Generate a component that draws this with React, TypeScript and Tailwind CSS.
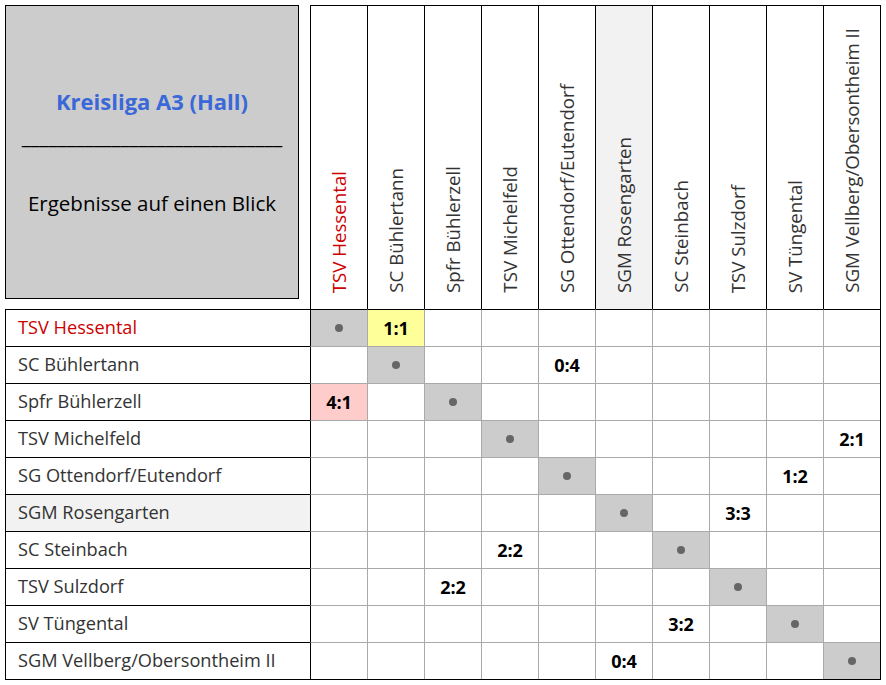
const teams = [
  'TSV Hessental',
  'SC Bühlertann',
  'Spfr Bühlerzell',
  'TSV Michelfeld',
  'SG Ottendorf/Eutendorf',
  'SGM Rosengarten',
  'SC Steinbach',
  'TSV Sulzdorf',
  'SV Tüngental',
  'SGM Vellberg/Obersontheim II',
];

type Result = { row: number; col: number; score: string; tone?: 'yellow' | 'red' };

const results: Result[] = [
  { row: 0, col: 1, score: '1:1', tone: 'yellow' },
  { row: 1, col: 4, score: '0:4' },
  { row: 2, col: 0, score: '4:1', tone: 'red' },
  { row: 3, col: 9, score: '2:1' },
  { row: 4, col: 8, score: '1:2' },
  { row: 5, col: 7, score: '3:3' },
  { row: 6, col: 3, score: '2:2' },
  { row: 7, col: 2, score: '2:2' },
  { row: 8, col: 6, score: '3:2' },
  { row: 9, col: 5, score: '0:4' },
];

const HOME = 0;
const MARKED = 5;

function BodyCell({ row, col }: { row: number; col: number }) {
  const res = results.find((r) => r.row === row && r.col === col);
  const diag = row === col;
  let bg = 'bg-white';
  if (diag) bg = 'bg-[#cccccc]';
  else if (res?.tone === 'yellow') bg = 'bg-[#ffff99]';
  else if (res?.tone === 'red') bg = 'bg-[#ffcccc]';

  const left = col === 0 ? 'border-l-black' : 'border-l-[#aaaaaa]';
  const top = row === 0 ? 'border-t-black' : 'border-t-[#aaaaaa]';

  return (
    <div className={`flex items-center justify-center border-l border-t ${left} ${top} ${bg}`}>
      {diag && <span className="block h-2 w-2 rounded-full bg-[#666666]" />}
      {res && <span className="text-[18px] font-bold text-black">{res.score}</span>}
    </div>
  );
}

export default function App() {
  return (
    <div className="min-h-screen bg-white p-[5px] font-['Open_Sans',sans-serif]">
      <div className="grid w-fit grid-cols-[305px_repeat(10,57px)] grid-rows-[304px_repeat(10,37px)] border-b border-r border-black">
        <div>
          <div className="flex h-[294px] w-[294px] flex-col items-center justify-center border border-black bg-[#cccccc] text-center">
            <div className="text-[22px] font-bold leading-[51px] text-[#3a68d8]">Kreisliga A3 (Hall)</div>
            <div className="-translate-y-[16px] text-[20.5px] leading-[51px] text-black">
              _____________________________
            </div>
            <div className="text-[20.5px] leading-[51px] text-black">Ergebnisse auf einen Blick</div>
          </div>
        </div>
        {teams.map((t, i) => (
          <div
            key={t}
            className={`flex items-end justify-center border-l border-t border-black pb-[16px] ${
              i === MARKED ? 'bg-[#f2f2f2]' : 'bg-white'
            }`}
          >
            <span
              className={`rotate-180 whitespace-nowrap text-[18.7px] leading-none [writing-mode:vertical-rl] ${
                i === HOME ? 'text-[#cc0000]' : 'text-[#333333]'
              }`}
            >
              {t}
            </span>
          </div>
        ))}
        {teams.map((t, row) => (
          <>
            <div
              key={`h-${t}`}
              className={`flex items-center border-l border-t border-black pl-[12px] text-[18.2px] ${
                row === HOME ? 'text-[#cc0000]' : 'text-[#333333]'
              } ${row === MARKED ? 'bg-[#f2f2f2]' : 'bg-white'}`}
            >
              {t}
            </div>
            {teams.map((_, col) => (
              <BodyCell key={`${row}-${col}`} row={row} col={col} />
            ))}
          </>
        ))}
      </div>
    </div>
  );
}
